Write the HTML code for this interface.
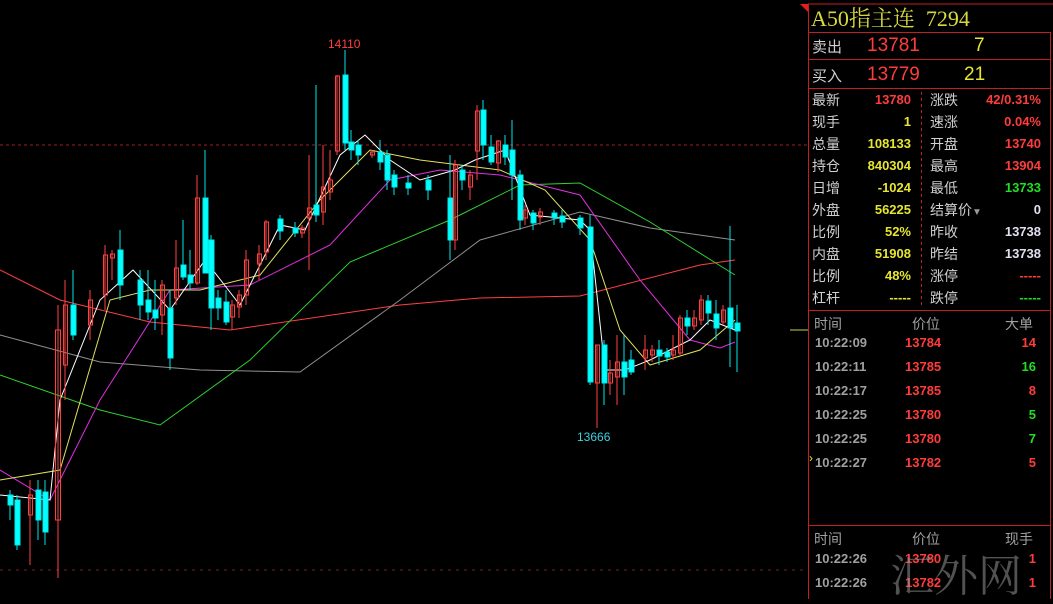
<!DOCTYPE html>
<html><head><meta charset="utf-8"><style>
body{margin:0;background:#000;width:1053px;height:599px;overflow:hidden;position:relative;font-family:"Liberation Sans","Noto Sans CJK SC",sans-serif}
.t{position:absolute;white-space:nowrap}
.l{color:#d0d0d0;font-size:14px}
.l div,.n div{height:22px;line-height:22px}
.n{font-size:13px;font-weight:bold;text-align:right}
.r{color:#ff3c3c}.y{color:#e6e632}.g{color:#22dd22}.w{color:#e0e0f0}.gr{color:#a0a0a0}
</style></head><body>
<svg width="1053" height="599" style="position:absolute;left:0;top:0">
<line x1="0" y1="145" x2="808" y2="145" stroke="#a02020" stroke-dasharray="3,3"/>
<line x1="0" y1="570" x2="808" y2="570" stroke="#702020" stroke-dasharray="3,5"/>
<line x1="808" y1="4" x2="1053" y2="4" stroke="#c02020"/>
<polygon points="800,4 808,4 808,12" fill="#e02020"/>
<line x1="808.5" y1="4" x2="808.5" y2="599" stroke="#c02020"/>
<line x1="790" y1="330" x2="808" y2="330" stroke="#d0d040"/>
<g fill="none" stroke-width="1">
<polyline stroke="#ff4040" points="0,270 60,300 150,322 230,330 400,305 480,298 580,296 700,265 735,260"/>
<polyline stroke="#909090" points="0,335 100,362 200,370 300,372 400,300 480,240 580,212 650,228 735,240"/>
<polyline stroke="#30d030" points="0,375 100,410 160,425 250,360 350,262 450,220 520,185 580,183 650,222 735,275"/>
<polyline stroke="#e030e0" points="0,470 50,500 100,400 170,290 250,285 330,245 390,180 440,170 500,175 580,195 640,280 690,340 720,348 735,342"/>
<polyline stroke="#e0e060" points="0,480 60,470 110,300 150,290 200,290 260,275 320,200 370,150 420,160 500,170 545,190 590,240 620,330 650,365 700,350 735,320"/>
<polyline stroke="#ffffff" points="0,495 50,500 60,400 100,300 133,270 170,310 205,260 240,305 280,225 305,230 340,155 365,135 390,160 420,180 455,170 475,160 505,150 530,215 580,220 590,230 605,370 625,370 650,360 690,340 710,320 735,330"/>
</g>
<g stroke="#00e8e8" fill="#00ffff">
<line x1="10" y1="490" x2="10" y2="520"/><rect x="8" y="495" width="5" height="10"/>
<line x1="17" y1="495" x2="17" y2="550"/><rect x="15" y="500" width="5" height="45"/>
<line x1="38" y1="480" x2="38" y2="540"/><rect x="36" y="490" width="5" height="30"/>
<line x1="45" y1="480" x2="45" y2="545"/><rect x="43" y="492" width="5" height="40"/>
<line x1="73" y1="270" x2="73" y2="340"/><rect x="71" y="305" width="5" height="30"/>
<line x1="120" y1="230" x2="120" y2="300"/><rect x="118" y="250" width="5" height="35"/>
<line x1="140" y1="270" x2="140" y2="320"/><rect x="138" y="280" width="5" height="25"/>
<line x1="148" y1="270" x2="148" y2="320"/><rect x="146" y="300" width="5" height="12"/>
<line x1="155" y1="280" x2="155" y2="330"/><rect x="153" y="310" width="5" height="8"/>
<line x1="170" y1="290" x2="170" y2="370"/><rect x="168" y="308" width="5" height="50"/>
<line x1="183" y1="220" x2="183" y2="280"/><rect x="181" y="265" width="5" height="12"/>
<line x1="190" y1="250" x2="190" y2="290"/><rect x="188" y="275" width="5" height="8"/>
<line x1="205" y1="150" x2="205" y2="250"/><rect x="203" y="198" width="5" height="75"/>
<line x1="211" y1="235" x2="211" y2="330"/><rect x="209" y="240" width="5" height="68"/>
<line x1="218" y1="290" x2="218" y2="320"/><rect x="216" y="298" width="5" height="10"/>
<line x1="226" y1="290" x2="226" y2="325"/><rect x="224" y="302" width="5" height="20"/>
<line x1="280" y1="215" x2="280" y2="240"/><rect x="278" y="219" width="5" height="12"/>
<line x1="295" y1="222" x2="295" y2="237"/><rect x="293" y="228" width="5" height="5"/>
<line x1="316" y1="85" x2="316" y2="222"/><rect x="314" y="205" width="5" height="10"/>
<line x1="345" y1="50" x2="345" y2="150"/><rect x="343" y="75" width="5" height="68"/>
<line x1="351" y1="130" x2="351" y2="160"/><rect x="349" y="142" width="5" height="8"/>
<line x1="358" y1="140" x2="358" y2="165"/><rect x="356" y="145" width="5" height="10"/>
<line x1="380" y1="140" x2="380" y2="170"/><rect x="378" y="152" width="5" height="10"/>
<line x1="387" y1="150" x2="387" y2="190"/><rect x="385" y="155" width="5" height="25"/>
<line x1="394" y1="170" x2="394" y2="195"/><rect x="392" y="175" width="5" height="12"/>
<line x1="408" y1="175" x2="408" y2="195"/><rect x="406" y="183" width="5" height="5"/>
<line x1="428" y1="175" x2="428" y2="200"/><rect x="426" y="180" width="5" height="10"/>
<line x1="450" y1="155" x2="450" y2="260"/><rect x="448" y="198" width="5" height="42"/>
<line x1="462" y1="165" x2="462" y2="190"/><rect x="460" y="170" width="5" height="10"/>
<line x1="483" y1="100" x2="483" y2="160"/><rect x="481" y="110" width="5" height="35"/>
<line x1="491" y1="135" x2="491" y2="165"/><rect x="489" y="147" width="5" height="15"/>
<line x1="505" y1="135" x2="505" y2="165"/><rect x="503" y="145" width="5" height="12"/>
<line x1="512" y1="120" x2="512" y2="200"/><rect x="510" y="150" width="5" height="25"/>
<line x1="520" y1="170" x2="520" y2="230"/><rect x="518" y="175" width="5" height="45"/>
<line x1="533" y1="210" x2="533" y2="230"/><rect x="531" y="213" width="5" height="10"/>
<line x1="554" y1="210" x2="554" y2="225"/><rect x="552" y="213" width="5" height="5"/>
<line x1="562" y1="210" x2="562" y2="228"/><rect x="560" y="216" width="5" height="6"/>
<line x1="580" y1="215" x2="580" y2="235"/><rect x="578" y="218" width="5" height="10"/>
<line x1="590" y1="215" x2="590" y2="385"/><rect x="588" y="227" width="5" height="155"/>
<line x1="604" y1="340" x2="604" y2="405"/><rect x="602" y="345" width="5" height="38"/>
<line x1="624" y1="335" x2="624" y2="395"/><rect x="622" y="362" width="5" height="15"/>
<line x1="631" y1="350" x2="631" y2="375"/><rect x="629" y="360" width="5" height="12"/>
<line x1="659" y1="340" x2="659" y2="365"/><rect x="657" y="350" width="5" height="6"/>
<line x1="667" y1="348" x2="667" y2="362"/><rect x="665" y="352" width="5" height="5"/>
<line x1="687" y1="310" x2="687" y2="335"/><rect x="685" y="318" width="5" height="8"/>
<line x1="708" y1="295" x2="708" y2="325"/><rect x="706" y="301" width="5" height="12"/>
<line x1="716" y1="300" x2="716" y2="340"/><rect x="714" y="314" width="5" height="14"/>
<line x1="730" y1="226" x2="730" y2="367"/><rect x="728" y="308" width="5" height="20"/>
<line x1="737" y1="305" x2="737" y2="372"/><rect x="735" y="323" width="5" height="8"/>
</g>
<g stroke="#ff4040" fill="none">
<line x1="30" y1="480" x2="30" y2="565"/><rect x="28.5" y="495" width="4" height="20"/>
<line x1="58" y1="305" x2="58" y2="578"/><rect x="55.5" y="330" width="5" height="190"/>
<line x1="65" y1="280" x2="65" y2="400"/><rect x="63.5" y="305" width="4" height="60"/>
<line x1="90" y1="290" x2="90" y2="340"/><rect x="88.5" y="300" width="4" height="25"/>
<line x1="105" y1="245" x2="105" y2="310"/><rect x="103.5" y="255" width="4" height="40"/>
<line x1="112" y1="250" x2="112" y2="280"/><rect x="110.5" y="254" width="4" height="4"/>
<line x1="162" y1="280" x2="162" y2="335"/><rect x="160.5" y="285" width="4" height="30"/>
<line x1="176" y1="240" x2="176" y2="305"/><rect x="174.5" y="268" width="4" height="30"/>
<line x1="197" y1="175" x2="197" y2="285"/><rect x="195.5" y="198" width="4" height="85"/>
<line x1="232" y1="300" x2="232" y2="330"/><rect x="230.5" y="305" width="4" height="12"/>
<line x1="239" y1="290" x2="239" y2="318"/><rect x="237.5" y="295" width="4" height="12"/>
<line x1="246" y1="250" x2="246" y2="305"/><rect x="244.5" y="260" width="4" height="35"/>
<line x1="259" y1="245" x2="259" y2="280"/><rect x="257.5" y="254" width="4" height="10"/>
<line x1="266" y1="220" x2="266" y2="260"/><rect x="264.5" y="222" width="4" height="30"/>
<line x1="302" y1="225" x2="302" y2="238"/><rect x="300.5" y="228" width="4" height="5"/>
<line x1="309" y1="155" x2="309" y2="270"/><rect x="307.5" y="208" width="4" height="10"/>
<line x1="323" y1="145" x2="323" y2="225"/><rect x="321.5" y="187" width="4" height="25"/>
<line x1="330" y1="150" x2="330" y2="200"/><rect x="328.5" y="180" width="4" height="12"/>
<line x1="337" y1="75" x2="337" y2="155"/><rect x="335.5" y="76" width="4" height="75"/>
<line x1="372" y1="150" x2="372" y2="158"/><rect x="370.5" y="152" width="4" height="3"/>
<line x1="455" y1="160" x2="455" y2="250"/><rect x="453.5" y="165" width="4" height="75"/>
<line x1="470" y1="170" x2="470" y2="200"/><rect x="468.5" y="175" width="4" height="12"/>
<line x1="477" y1="105" x2="477" y2="180"/><rect x="475.5" y="111" width="4" height="40"/>
<line x1="498" y1="140" x2="498" y2="172"/><rect x="496.5" y="141" width="4" height="22"/>
<line x1="525" y1="205" x2="525" y2="225"/><rect x="523.5" y="210" width="4" height="8"/>
<line x1="540" y1="208" x2="540" y2="225"/><rect x="538.5" y="212" width="4" height="5"/>
<line x1="597" y1="345" x2="597" y2="428"/><rect x="595.5" y="345" width="4" height="38"/>
<line x1="610" y1="360" x2="610" y2="395"/><rect x="608.5" y="373" width="4" height="10"/>
<line x1="617" y1="335" x2="617" y2="405"/><rect x="615.5" y="362" width="4" height="15"/>
<line x1="645" y1="335" x2="645" y2="370"/><rect x="643.5" y="350" width="4" height="8"/>
<line x1="652" y1="345" x2="652" y2="362"/><rect x="650.5" y="350" width="4" height="5"/>
<line x1="673" y1="335" x2="673" y2="360"/><rect x="671.5" y="350" width="4" height="5"/>
<line x1="680" y1="315" x2="680" y2="355"/><rect x="678.5" y="318" width="4" height="35"/>
<line x1="694" y1="310" x2="694" y2="330"/><rect x="692.5" y="318" width="4" height="8"/>
<line x1="701" y1="295" x2="701" y2="325"/><rect x="699.5" y="300" width="4" height="20"/>
<line x1="723" y1="305" x2="723" y2="325"/><rect x="721.5" y="310" width="4" height="12"/>
</g>
<text x="328" y="48" fill="#ff4040" font-size="12" font-family="Liberation Sans">14110</text>
<text x="577" y="441" fill="#40d0e0" font-size="12" font-family="Liberation Sans">13666</text>
<g stroke="#c02020" fill="none">
<line x1="809" y1="32.5" x2="1050" y2="32.5"/>
<line x1="809" y1="59.5" x2="1050" y2="59.5"/>
<line x1="809" y1="88.5" x2="1050" y2="88.5"/>
<line x1="1050.5" y1="32" x2="1050.5" y2="599"/>
<line x1="809" y1="310.5" x2="1050" y2="310.5"/>
<line x1="809" y1="525.5" x2="1050" y2="525.5"/>
<line x1="921.5" y1="92" x2="921.5" y2="308" stroke-dasharray="3,3"/>
</g>
</svg>
<div class="t" style="left:811px;top:2px;font-family:'Liberation Serif','Noto Serif CJK SC',serif;font-size:22px;color:#d8d840">A50指主连&nbsp;&nbsp;7294</div>
<div class="t l" style="left:812px;top:36px;font-size:15px">卖出</div>
<div class="t r" style="left:867px;top:35px;font-size:19px">13781</div>
<div class="t y" style="left:974px;top:35px;font-size:19px">7</div>
<div class="t l" style="left:812px;top:65px;font-size:15px">买入</div>
<div class="t r" style="left:867px;top:64px;font-size:19px">13779</div>
<div class="t y" style="left:964px;top:64px;font-size:19px">21</div>

<div class="t l" style="left:812px;top:89px"><div>最新</div><div>现手</div><div>总量</div><div>持仓</div><div>日增</div><div>外盘</div><div>比例</div><div>内盘</div><div>比例</div><div>杠杆</div></div>
<div class="t n" style="right:142px;top:89px"><div class="r">13780</div><div class="y">1</div><div class="y">108133</div><div class="y">840304</div><div class="y">-1024</div><div class="y">56225</div><div class="y">52%</div><div class="y">51908</div><div class="y">48%</div><div class="y">-----</div></div>
<div class="t l" style="left:930px;top:89px"><div>涨跌</div><div>速涨</div><div>开盘</div><div>最高</div><div>最低</div><div>结算价<span style="color:#999;font-size:10px">▼</span></div><div>昨收</div><div>昨结</div><div>涨停</div><div>跌停</div></div>
<div class="t n" style="right:12px;top:89px"><div class="r">42/0.31%</div><div class="r">0.04%</div><div class="r">13740</div><div class="r">13904</div><div class="g">13733</div><div class="w">0</div><div class="w">13738</div><div class="w">13738</div><div class="r">-----</div><div class="g">-----</div></div>

<div class="t gr" style="left:814px;top:314px;font-size:14px">时间</div>
<div class="t gr" style="left:912px;top:314px;font-size:14px">价位</div>
<div class="t gr" style="left:1005px;top:314px;font-size:14px">大单</div>
<div class="t gr" style="left:815px;top:331px;line-height:24px;font-size:13px;font-weight:bold">10:22:09<br>10:22:11<br>10:22:17<br>10:22:25<br>10:22:25<br>10:22:27</div>
<div class="t r" style="left:905px;top:331px;line-height:24px;font-size:13px;font-weight:bold">13784<br>13785<br>13785<br>13780<br>13780<br>13782</div>
<div class="t n" style="right:17px;top:331px;line-height:24px"><span class="r">14</span><br><span class="g">16</span><br><span class="r">8</span><br><span class="g">5</span><br><span class="g">7</span><br><span class="r">5</span></div>
<div class="t y" style="left:809px;top:451px;font-size:12px">›</div>

<div class="t gr" style="left:814px;top:529px;font-size:14px">时间</div>
<div class="t gr" style="left:912px;top:529px;font-size:14px">价位</div>
<div class="t gr" style="left:1005px;top:529px;font-size:14px">现手</div>
<div class="t gr" style="left:815px;top:547px;line-height:24px;font-size:13px;font-weight:bold">10:22:26<br>10:22:26</div>
<div class="t r" style="left:905px;top:547px;line-height:24px;font-size:13px;font-weight:bold">13780<br>13782</div>
<div class="t n r" style="right:17px;top:547px;line-height:24px">1<br>1</div>
<div class="t" style="left:890px;top:540px;font-family:'Noto Serif CJK SC',serif;font-size:44px;color:rgba(150,150,150,0.55)">汇外网</div>
</body></html>
